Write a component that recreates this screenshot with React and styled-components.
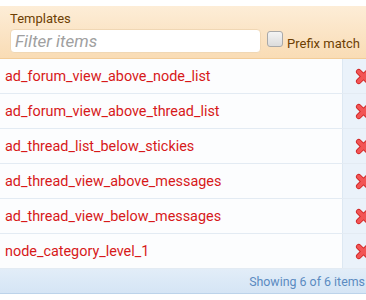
import React from 'react';
import styled, { createGlobalStyle } from 'styled-components';

const GlobalStyle = createGlobalStyle`
  body {
    margin: 0;
    background: #fff;
    font-family: Roboto, "Liberation Sans", sans-serif;
    overflow: hidden;
  }
`;

const templates = [
  'ad_forum_view_above_node_list',
  'ad_forum_view_above_thread_list',
  'ad_thread_list_below_stickies',
  'ad_thread_view_above_messages',
  'ad_thread_view_below_messages',
  'node_category_level_1',
];

const Wrap = styled.div`
  width: 383px;
  padding-top: 6px;
`;

const Header = styled.div`
  background: linear-gradient(to bottom, #fdedd7, #f9dcb5);
  border-bottom: 1px solid #f2cc98;
  padding: 5px 10px 5px;
  height: 42px;
`;

const Title = styled.div`
  color: #6d3f03;
  font-size: 13px;
  line-height: 16px;
  margin-bottom: 2px;
`;

const FilterRow = styled.div`
  display: flex;
  align-items: center;
  gap: 6px;
`;

const FilterInput = styled.input`
  width: 251px;
  height: 24px;
  box-sizing: border-box;
  border: 1px solid #f0d7b4;
  border-radius: 4px;
  background: #fff;
  padding: 0 4px;
  font-family: inherit;
  font-size: 17px;
  font-style: italic;
  &::placeholder {
    color: #a0a0a0;
  }
`;

const CheckLabel = styled.label`
  display: flex;
  align-items: flex-end;
  gap: 4px;
  color: #6d3f03;
  font-size: 13px;
`;

const CheckBox = styled.span`
  display: inline-block;
  width: 14px;
  height: 14px;
  border: 1px solid #a9a9a9;
  border-radius: 3px;
  background: linear-gradient(#f4f4f4, #dcdcdc);
  margin-bottom: 4px;
`;

const List = styled.div`
  display: flex;
  flex-direction: column;
`;

const Row = styled.div`
  display: flex;
  height: 34px;
  border-bottom: 1px solid #e3ebf3;
  background: #fcfdfe;
`;

const Name = styled.div`
  flex: 1;
  display: flex;
  align-items: center;
  padding-left: 5px;
  color: #d7191a;
  font-size: 14.4px;
`;

const DeleteCell = styled.div`
  width: 40px;
  display: flex;
  align-items: center;
  justify-content: center;
  background: #eaf2fa;
  border-left: 1px solid #dde8f2;
`;

const Footer = styled.div`
  height: 24px;
  background: linear-gradient(to bottom, #e2edf8, #d5e5f5);
  border-bottom: 1px solid #bcd3ea;
  display: flex;
  align-items: center;
  justify-content: flex-end;
  padding-right: 18px;
  color: #5b8bc1;
  font-size: 12.4px;
`;

function DeleteIcon() {
  return (
    <svg width="17" height="17" viewBox="0 0 16 16">
      <g strokeLinecap="round">
        <path d="M3.5 3.5 L12.5 12.5 M12.5 3.5 L3.5 12.5" stroke="#cf2626" strokeWidth="5.2" />
        <path d="M3.5 3.5 L12.5 12.5 M12.5 3.5 L3.5 12.5" stroke="#f25555" strokeWidth="3.6" />
      </g>
    </svg>
  );
}

export default function App() {
  return (
    <Wrap>
      <GlobalStyle />
      <Header>
        <Title>Templates</Title>
        <FilterRow>
          <FilterInput placeholder="Filter items" />
          <CheckLabel>
            <CheckBox />
            Prefix match
          </CheckLabel>
        </FilterRow>
      </Header>
      <List>
        {templates.map((t) => (
          <Row key={t}>
            <Name>{t}</Name>
            <DeleteCell>
              <DeleteIcon />
            </DeleteCell>
          </Row>
        ))}
      </List>
      <Footer>Showing 6 of 6 items</Footer>
    </Wrap>
  );
}
